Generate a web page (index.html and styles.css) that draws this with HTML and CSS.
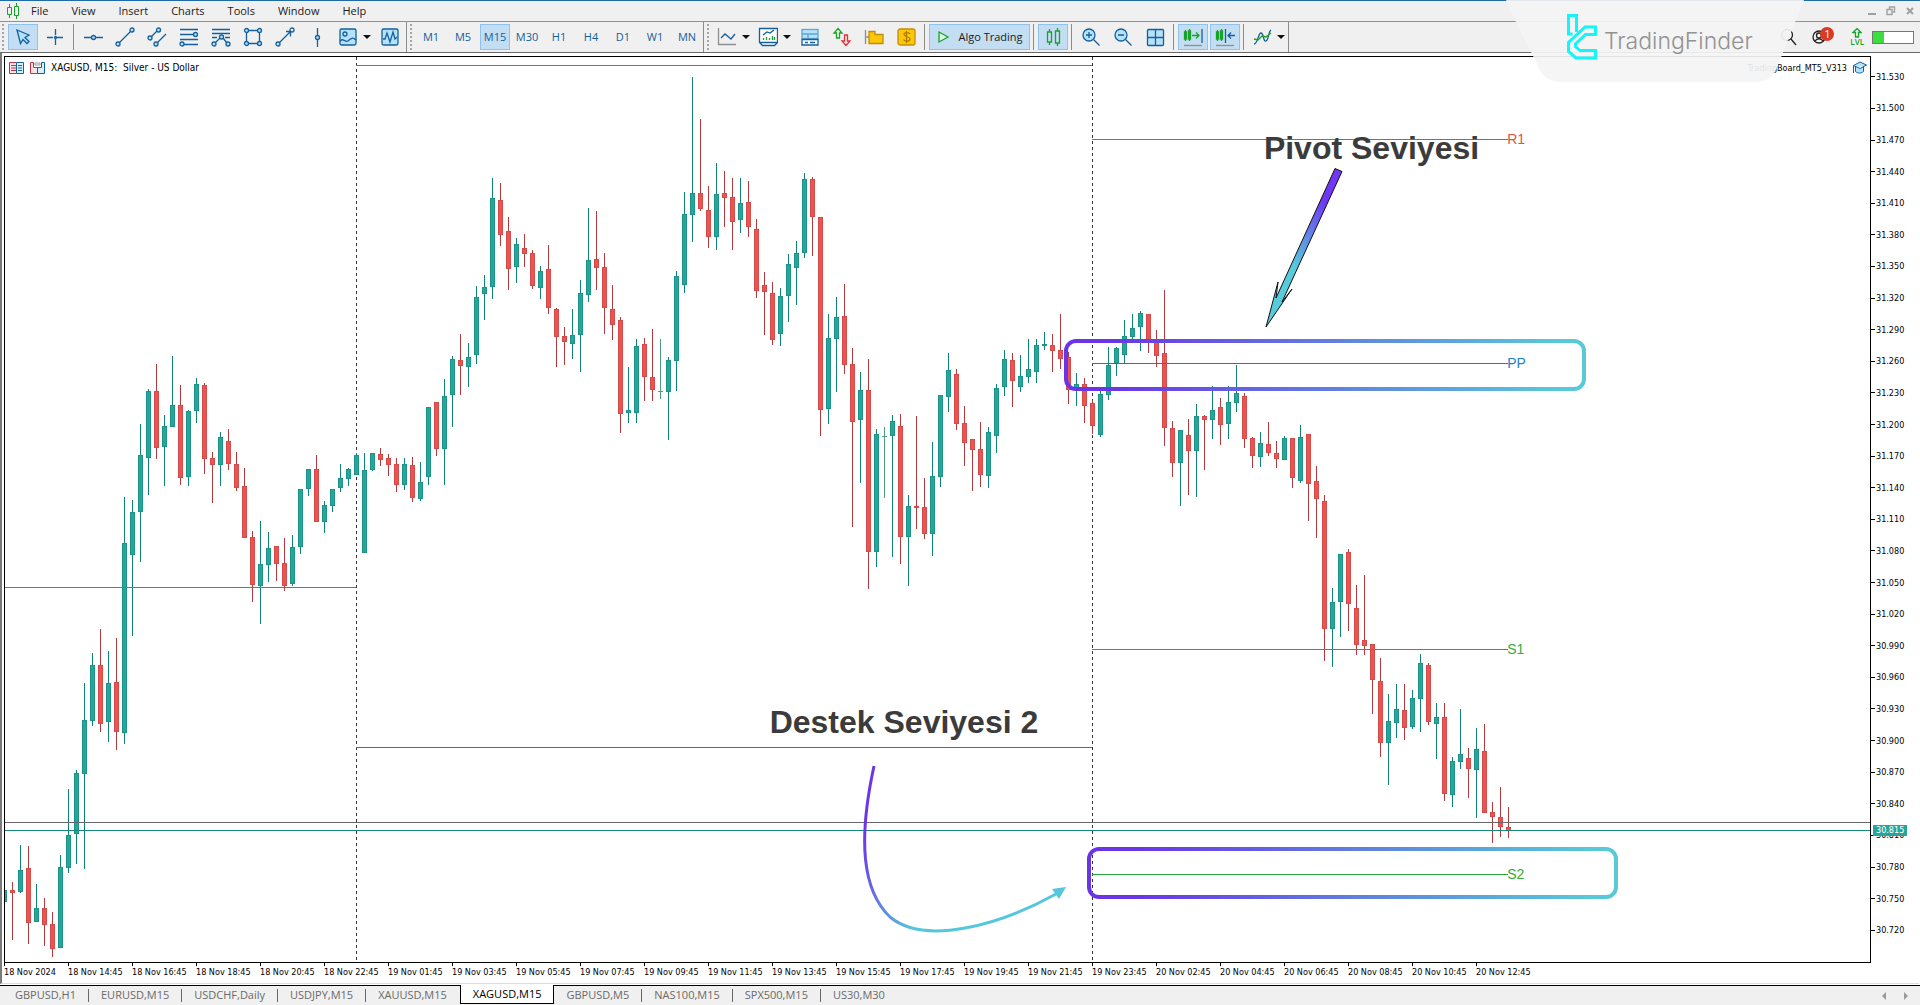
FILE: index.html
```html
<!DOCTYPE html>
<html lang="en">
<head>
<meta charset="utf-8">
<title>XAGUSD, M15</title>
<link rel="stylesheet" href="styles.css">
</head>
<body>
<header class="menubar">
  <svg class="app-icon" width="14" height="16" viewBox="0 0 14 16"><path d="M3.500 1v3M3.500 11v4M10.500 0v3M10.500 12v4M1.500 4.500h4v7h-4zM8.500 3.500h4v9h-4z"/></svg>
  <nav class="menus">
    <button>File</button><button>View</button><button>Insert</button><button>Charts</button><button>Tools</button><button>Window</button><button>Help</button>
  </nav>
  <div class="window-controls">
    <button aria-label="Minimize"><svg width="10" height="10"><path d="M1 8h8" stroke-width="2"/></svg></button>
    <button aria-label="Restore"><svg width="10" height="10"><path d="M1 3.500h5v5h-5zM3.500 3V1h5v5h-2" fill="none" stroke-width="1.400"/></svg></button>
    <button aria-label="Close"><svg width="10" height="10"><path d="M2 2l6 6M8 2l-6 6" stroke-width="2"/></svg></button>
  </div>
</header>

<div class="toolbars">
  <div class="toolbar">
    <span class="grip"></span>
    <button class="tool on" aria-label="Cursor"><svg class="ic" viewBox="0 0 20 20"><path class="f" d="M4 3l12 5-4 2.500 4 4-2 2-4-4-2.500 4z"/></svg></button>
    <button class="tool" aria-label="Crosshair"><svg class="ic" viewBox="0 0 20 20"><path d="M2 10.500h6M12 10.500h6M10.500 2v6M10.500 12v6"/><circle cx="10.500" cy="10.500" r="1"/></svg></button>
    <i class="sep"></i>
    <button class="tool" aria-label="Horizontal line"><svg class="ic" viewBox="0 0 20 20"><path d="M1 10.500h7M13 10.500h7"/><circle class="f" cx="10.500" cy="10.500" r="2"/></svg></button>
    <button class="tool" aria-label="Trend line"><svg class="ic" viewBox="0 0 20 20"><path d="M4.500 15.500l11-11"/><circle class="f" cx="3" cy="17" r="2"/><circle class="f" cx="17" cy="3" r="2"/></svg></button>
    <button class="tool" aria-label="Channel"><svg class="ic" viewBox="0 0 20 20"><path d="M4 10l6-6M10 16l9-9"/><circle class="f" cx="3" cy="11" r="2"/><circle class="f" cx="11.500" cy="3" r="2"/><circle class="f" cx="9" cy="17" r="2"/></svg></button>
    <button class="tool" aria-label="Fibonacci"><svg class="ic" viewBox="0 0 20 20"><path d="M1 2.500h18M1 7.500h13M1 12.500h18M5 17.500h14"/><circle class="f" cx="16.500" cy="7.500" r="2"/><circle class="f" cx="3" cy="17" r="2"/></svg></button>
    <button class="tool" aria-label="Fan"><svg class="ic" viewBox="0 0 20 20"><path d="M1 2.500h18M1 6.500h18M1 10.500h5M14 10.500h5M4 16l5-5M12 11l4 5"/><circle class="f" cx="10.500" cy="10" r="2"/><circle class="f" cx="3" cy="17" r="2"/><circle class="f" cx="17" cy="17" r="2"/></svg></button>
    <button class="tool" aria-label="Rectangle"><svg class="ic" viewBox="0 0 20 20"><path d="M3.500 3.500h13v13h-13z"/><circle class="f" cx="3.500" cy="3.500" r="2"/><circle class="f" cx="16.500" cy="3.500" r="2"/><circle class="f" cx="3.500" cy="16.500" r="2"/><circle class="f" cx="16.500" cy="16.500" r="2"/></svg></button>
    <button class="tool" aria-label="Arrow"><svg class="ic" viewBox="0 0 20 20"><path d="M4.500 15.500l11-11M11 4.500h4.500v5"/><circle class="f" cx="3" cy="17" r="2"/><circle cx="17" cy="3" r="2"/></svg></button>
    <button class="tool" aria-label="Vertical line"><svg class="ic" viewBox="0 0 20 20"><path d="M10.500 1v7M10.500 13v7"/><circle class="f" cx="10.500" cy="10.500" r="2"/></svg></button>
    <button class="tool drop" aria-label="Objects"><svg class="ic" viewBox="0 0 20 20"><rect class="f" x="2" y="2" width="16" height="16" rx="1.500"/><circle cx="7" cy="7" r="2"/><path d="M2 14c3-4 5 2 8 0s4-5 8-1"/></svg><i class="caret"></i></button>
    <button class="tool" aria-label="Indicators"><svg class="ic" viewBox="0 0 20 20"><rect class="f" x="2" y="2" width="16" height="16" rx="1.500"/><path d="M3 12h2l2-6 3 9 3-10 2 7 2-2"/></svg></button>
  </div>
  <div class="toolbar">
    <span class="grip"></span>
    <button class="tool">M1</button><button class="tool">M5</button><button class="tool on">M15</button><button class="tool">M30</button><button class="tool">H1</button><button class="tool">H4</button><button class="tool">D1</button><button class="tool">W1</button><button class="tool">MN</button>
  </div>
  <div class="toolbar">
    <span class="grip"></span>
    <button class="tool drop" aria-label="Chart type"><svg class="ic" viewBox="0 0 20 20"><path class="g" d="M1.500 1v16.500H19"/><path d="M4 11l4-4 6 5 4-5"/></svg><i class="caret"></i></button>
    <button class="tool drop" aria-label="Templates"><svg class="ic" viewBox="0 0 20 20"><path class="w" d="M1.500 1.500h18v14l-3 3h-12l-3-3zM2 15.500h17"/><path d="M5 8l4-3 3 1 4-3"/><path class="gr" d="M5.500 13v-2M8.500 13v-3M11.500 13v-2M14.500 13v-4M16.500 13v-3"/></svg><i class="caret"></i></button>
    <button class="tool" aria-label="Terminal"><svg class="ic" viewBox="0 0 20 20"><rect class="f soft" x="2" y="2.500" width="16" height="9"/><path class="soft" d="M2 7h16M8 7v4"/><path class="w" d="M2 12.500h16v5.500H2z"/><path d="M5 15.500h3M10 15.500h5"/></svg></button>
    <button class="tool" aria-label="Depth of market"><svg class="ic" viewBox="0 0 20 20"><path class="gr" d="M6 1.500l4 4.500H7.500v5h-3V6H2z"/><path class="rd" d="M14 18.500l4-4.500h-2.500V8h-3v6H10z"/></svg></button>
    <button class="tool" aria-label="Navigator"><svg class="ic" viewBox="0 0 20 20"><path class="g" d="M1.500 3v14M1.500 10h4"/><path class="y" d="M5 4.500h6v3h8v9H5z"/></svg></button>
    <button class="tool" aria-label="Toolbox"><svg class="ic" viewBox="0 0 20 20"><rect class="y" x="2" y="2" width="17" height="16" rx="2"/><path class="br" d="M14 7c-1-2-6-2-6 .5s6 2 6 4.500-5 3-6.500.5M10.500 4v12"/></svg></button>
    <i class="sep"></i>
    <button class="tool on algo"><svg class="ic" viewBox="0 0 20 20"><path class="play" d="M5 5l9 5-9 5z"/></svg>Algo Trading</button>
    <i class="sep"></i>
    <button class="tool on" aria-label="Candles"><svg class="ic" viewBox="0 0 20 20"><path class="gr" d="M6.500 2v3M6.500 15v3M14.500 1v3M14.500 16v3M4.500 5h4v10h-4zM12.500 4h4v12h-4z"/></svg></button>
    <i class="sep"></i>
    <button class="tool" aria-label="Zoom in"><svg class="ic" viewBox="0 0 20 20"><circle class="f" cx="8" cy="8" r="6"/><path d="M12.500 12.500l6 6M5 8h6M8 5v6"/></svg></button>
    <button class="tool" aria-label="Zoom out"><svg class="ic" viewBox="0 0 20 20"><circle class="f" cx="8" cy="8" r="6"/><path d="M12.500 12.500l6 6M5 8h6"/></svg></button>
    <button class="tool" aria-label="Tile windows"><svg class="ic" viewBox="0 0 20 20"><rect class="f" x="2.500" y="2.500" width="16" height="16" rx="1"/><path d="M10.500 2.500v16M2.500 10.500h16"/></svg></button>
    <i class="sep"></i>
    <button class="tool on" aria-label="Auto scroll"><svg class="ic" viewBox="0 0 20 20"><path class="gr" d="M2.500 3v11M6.500 2v12M1.500 5h2v7h-2zM5.500 4h2v8h-2zM9 8.500h7M13 5.500l3 3-3 3"/><path d="M19 2v14"/><path class="g" d="M1 18.500h18"/></svg></button>
    <button class="tool on" aria-label="Chart shift"><svg class="ic" viewBox="0 0 20 20"><path class="gr" d="M2.500 3v11M6.500 2v12M1.500 5h2v7h-2zM5.500 4h2v8h-2z"/><path d="M10.500 2v14M13 8.500h7M16 5.500l-3 3 3 3"/><path class="g" d="M1 18.500h18"/></svg></button>
    <i class="sep"></i>
    <button class="tool drop" aria-label="Indicator list"><svg class="ic" viewBox="0 0 20 20"><path d="M2 17c4 0 4-11 7-11s2 9 5 8 2-9 5-11"/><path class="gr" d="M2 12l4 1 4-4 4 1 5-4"/></svg><i class="caret"></i></button>
  </div>
  <div class="status">
    <button aria-label="Search"><svg width="18" height="18" viewBox="0 0 18 18"><circle cx="7" cy="7" r="5.500"/><path d="M11 11l5 6"/></svg></button>
    <button class="account" aria-label="Account"><svg width="16" height="16" viewBox="0 0 16 16"><circle cx="7" cy="8" r="6"/><circle cx="7" cy="6.500" r="2.500"/><path d="M3 12c2-3 6-3 8 0"/></svg><span class="badge">1</span></button>
    <button class="lvl" aria-label="Level"><svg width="10" height="10" viewBox="0 0 10 10"><path d="M5 .5L9 4.500H6.500V9h-3V4.500H1z"/></svg><span>LVL</span></button>
    <span class="battery"><i></i></span>
  </div>
</div>

<main class="chart">
  <section class="plot">
    <svg class="series" viewBox="5 57 1865 905" preserveAspectRatio="none">
      <defs>
        <linearGradient id="band"><stop offset="0.080" stop-color="#6a35e6"/><stop offset="0.950" stop-color="#57c9d9"/></linearGradient>
        <linearGradient id="drop" x1="0.700" y1="0" x2="0.300" y2="1"><stop offset="0.150" stop-color="#7038f2"/><stop offset="0.650" stop-color="#55cbdc"/></linearGradient>
        <linearGradient id="swoop" x1="0" y1="0" x2="1" y2="0.300"><stop offset="0.100" stop-color="#6d35e8"/><stop offset="0.500" stop-color="#55c6db"/></linearGradient>
      </defs>
      <g class="periods"><path d="M356.500 57V962M1092.500 57V962"/></g>
      <g id="candles"></g>
      <g class="levels">
        <path class="r" d="M5 587.500H356M356 65.500H1092M1092 139.500H1508"/>
        <path class="p" d="M356 747.500H1092M1092 363.500H1508"/>
        <path class="s" d="M1092 649.500H1508M1092 874.500H1508"/>
        <path class="ask" d="M5 822.500H1870"/>
        <path class="bid" d="M5 830.500H1870"/>
      </g>
      <g class="notes">
        <rect x="1066" y="341" width="518" height="48" rx="10" stroke="url(#band)"/>
        <rect x="1089" y="849" width="527" height="48" rx="10" stroke="url(#band)"/>
        <path class="pointer" d="M1335 168.500L1342 171.500L1282 302L1292 289L1266 327L1278 282L1276 298z"/>
        <path class="swoop" d="M874 766C858 840 862 890 890 917C925 946 1000 925 1056 894"/>
        <path class="head" d="M1066 887l-14 2 7 10z"/>
      </g>
    </svg>
    <div class="caption">
      <svg width="15" height="12" viewBox="0 0 15 12"><path class="cr" d="M7.500 .5h-7v11h7M2 3.500h5M2 6h5M2 8.500h5"/><path class="cb" d="M7.500 .5h7v11h-7zM9 3.500h4M9 6h4M9 8.500h4"/></svg>
      <svg width="15" height="12" viewBox="0 0 15 12"><path class="cr" d="M.5 .5h3v5h4v6h-7z"/><path class="cb" d="M14.500 .5h-3v5h-4v6h7z"/><path class="cg" d="M5 1h5v2H5z"/></svg>
      <span>XAGUSD, M15:&nbsp; Silver - US Dollar</span>
    </div>
    <div class="expert"><span>TradingBoard_MT5_V313</span>
      <svg width="15" height="13" viewBox="0 0 15 13"><path d="M3.500 5.500v5c2 2 6 2 8 0v-5M1.500 4.500L8 1l6.500 3L8 7.500zM1.500 4.500V12"/></svg>
    </div>
    <span class="level r1">R1</span>
    <span class="level pp">PP</span>
    <span class="level s1">S1</span>
    <span class="level s2">S2</span>
    <strong class="note pivot">Pivot Seviyesi</strong>
    <strong class="note support">Destek Seviyesi 2</strong>
  </section>
  <aside class="prices"><ol id="prices"></ol><span class="last">30.815</span></aside>
  <ol class="times" id="times"></ol>
</main>

<footer class="tabs">
  <button>GBPUSD,H1</button><button>EURUSD,M15</button><button>USDCHF,Daily</button><button>USDJPY,M15</button><button>XAUUSD,M15</button><button class="active">XAGUSD,M15</button><button>GBPUSD,M5</button><button>NAS100,M15</button><button>SPX500,M15</button><button>US30,M30</button>
  <span class="scroll"><button aria-label="Scroll left" class="left"></button><button aria-label="Scroll right" class="right"></button></span>
</footer>

<div class="brand">
  <svg class="plate" width="300" height="82" viewBox="0 0 300 82"><path d="M0 0L10 22L32 66Q38 82 56 82H250Q264 82 270 70L298 0z"/></svg>
  <svg class="mark" width="30" height="47" viewBox="0 0 30 47"><path d="M9.500 19V2.500H1.500V21h4M28.500 14H18L1.500 29.500V38.500L9 45H28.500V37.500H13L8.500 33.500V31L18.500 21.500H28.500z"/></svg>
  <span>TradingFinder</span>
</div>
<script src="chart.js"></script>
</body>
</html>
```
FILE: styles.css
```css
* { box-sizing: border-box; }
body { margin: 0; height: 100vh; display: flex; flex-direction: column; background: #fff; font: 11px/16px "Open Sans", "Noto Sans", sans-serif; color: #1a1a1a; overflow: hidden; position: relative; }
button { font: inherit; color: inherit; background: none; border: 0; padding: 0; margin: 0; }
ol { list-style: none; margin: 0; padding: 0; }
svg { display: block; }

.menubar { display: flex; align-items: center; height: 22px; border-top: 1px solid #1f6aa8; border-bottom: 1px solid #919191; background: #f0f0f0; padding: 0 5px 0 6px; flex: none; }
.app-icon path { fill: none; stroke: #17a32a; }
.menus { display: flex; gap: 1px; }
.menus button { padding: 0 11px; }
.window-controls { margin-left: auto; display: flex; gap: 9px; }
.window-controls path { stroke: #a0a0a0; }

.toolbars { display: flex; height: 31px; flex: none; background: #f0f0f0; border-bottom: 1px solid #696969; }
.toolbar { display: flex; align-items: center; gap: 2px; padding: 0 1px 0 3px; border-right: 1px solid #8c8c8c; color: #15609c; }
.toolbar:first-child { padding-left: 2px; }
.grip { width: 2px; height: 26px; margin-right: 2px; background: repeating-linear-gradient(#a6a6a6 0 2px, transparent 2px 4px); }
.tool { width: 30px; height: 26px; display: flex; align-items: center; justify-content: center; border: 1px solid transparent; flex: none; }
.tool.on { background: #c3def3; border-color: #90c3eb; }
.tool.drop { width: 39px; justify-content: flex-start; padding-left: 3px; gap: 5px; }
.tool.algo { width: 101px; color: #1a1a1a; gap: 4px; padding-right: 2px; }
.sep { width: 1px; height: 26px; background: #8c8c8c; margin: 0 2px 0 1px; }
.caret { border: 4px solid transparent; border-top-color: #111; border-bottom: 0; }
.ic { width: 20px; height: 20px; fill: none; stroke: #15609c; stroke-width: 1.3; flex: none; }
.ic .f { fill: #b5e2fb; }
.ic .w { fill: #fff; }
.ic .soft { stroke: #5fa6d3; }
.ic .g { stroke: #8e8e8e; }
.ic .gr { stroke: #17a32a; }
.ic .rd { stroke: #d9373c; fill: #fbdcdc; }
.ic .y { fill: #fcc60a; stroke: #c48d06; }
.ic .br { stroke: #b07a00; }
.ic .play { stroke: #17a32a; fill: #e3f7e6; }

.status { margin-left: auto; display: flex; align-items: center; padding-right: 6px; }
.status svg { fill: none; stroke: #222; stroke-width: 1.3; }
.account { position: relative; margin-left: 14px; width: 22px; }
.badge { position: absolute; left: 8px; top: -2px; width: 14px; height: 14px; border-radius: 7px; background: #d93a22; color: #fff; line-height: 14px; }
.lvl { display: flex; flex-direction: column; align-items: center; margin-left: 16px; color: #17a32a; font-size: 8px; line-height: 8px; font-weight: 600; }
.status .lvl svg { stroke: #17a32a; }
.battery { width: 42px; height: 13px; border: 1px solid #777; background: #fff; margin-left: 8px; display: flex; }
.battery i { width: 11px; background: #3fdc3f; }

.chart { flex: 1; min-height: 0; display: grid; grid-template-columns: 1fr 48px; grid-template-rows: minmax(0, 1fr) 20px; margin: 0 1px 1px 0; padding: 3px 0 0 2px; border-left: 2px solid #7a7a7a; border-bottom: 1px solid #dcdcdc; font: 9px/12px "DejaVu Sans Condensed", "DejaVu Sans", sans-serif; color: #000; }
.plot { position: relative; border: 1px solid #000; }
.series { width: 100%; height: 100%; shape-rendering: crispEdges; }
.periods path { stroke: #333; stroke-dasharray: 3 3; }
.levels path { fill: none; }
.levels .r { stroke: #c8523f; }
.levels .p { stroke: #2277b8; }
.levels .s { stroke: #2aa43a; }
.levels .ask { stroke: #666; }
.levels .bid { stroke: #16877d; }
.wick.up { fill: #0f8377; }
.wick.down { fill: #b03a3e; }
.body.up { fill: #26a69a; stroke: #1d9488; }
.body.down { fill: #ef5350; stroke: #d44a48; }
.flat { fill: #4f9e80; }
.notes { shape-rendering: auto; fill: none; stroke-width: 4; }
.notes .pointer { fill: url(#drop); stroke: #111; stroke-width: 1; }
.notes .swoop { stroke: url(#swoop); stroke-width: 3; }
.notes .head { fill: #55c6db; }

.caption { position: absolute; left: 4px; top: 5px; display: flex; align-items: center; gap: 6px; font-size: 10px; }
.caption svg { fill: none; }
.caption .cr { stroke: #c4304a; fill: #fde4e4; }
.caption .cb { stroke: #15609c; fill: #d5effc; }
.caption .cg { stroke: #999; fill: #fff; }
.expert { position: absolute; right: 3px; top: 4px; display: flex; align-items: center; gap: 5px; }
.expert path { fill: #b5e2fb; stroke: #15609c; }
.level { position: absolute; left: 80.55%; font: 14px/16px "Liberation Sans", Arial, sans-serif; transform: translateY(-50%); }
.r1 { top: 9.1%; color: #dd5347; }
.pp { top: 33.8%; color: #2380c8; }
.s1 { top: 65.4%; color: #2fae3c; }
.s2 { top: 90.3%; color: #2fae3c; }
.note { position: absolute; font: bold 32px/36px "Liberation Sans", Arial, sans-serif; color: #3b3b3b; white-space: nowrap; }
.pivot { left: 67.5%; top: 8.1%; }
.support { left: 41%; top: 71.5%; }

.prices { position: relative; display: flex; }
.prices ol { flex: 1; display: flex; flex-direction: column; padding: 5px 0 17px; }
.prices li { flex: 1; display: flex; align-items: center; gap: 1px; }
.prices li::before { content: ""; width: 4px; height: 1px; background: #000; }
.last { position: absolute; left: 2px; top: 84.8%; width: 34px; padding-left: 3px; height: 11px; line-height: 11px; background: #26a69a; color: #fff; }
.times { grid-column: 1 / -1; display: flex; white-space: nowrap; padding-right: 48px; }
.times li { flex: 64 0 0; min-width: 0; }
.times li::before { content: ""; display: block; width: 1px; height: 3px; background: #000; }
.times li:last-child { flex-grow: 331; visibility: hidden; }

.tabs { flex: none; height: 20px; display: flex; border-top: 1px solid #000; background: #f0f0f0; padding-left: 3px; color: #6a6a6a; line-height: 16px; }
.tabs > button { padding: 0 13px 2px 12px; position: relative; }
.tabs > button:not(.active):not(:last-of-type)::after { content: ""; position: absolute; right: 0; top: 3px; height: 13px; width: 1px; background: #666; }
.tabs > button:nth-child(5)::after { visibility: hidden; }
.tabs > .active { background: #fff; color: #000; border: solid #000; border-width: 0 1px 1px; margin: -1px 0 1px; padding: 0 12px 1px; }
.scroll { margin-left: auto; display: flex; align-items: center; gap: 18px; padding-right: 12px; }
.scroll button { border: 4px solid transparent; }
.scroll .left { border-right-color: #999; border-left: 0; }
.scroll .right { border-left-color: #999; border-right: 0; }

.brand { position: absolute; right: 114px; top: 0; width: 300px; height: 82px; display: flex; padding: 13px 0 0 61px; gap: 7px; color: #929292; font: 300 23px/28px Inter, Roboto, sans-serif; }
.brand .plate { position: absolute; left: 0; top: 0; fill: #f4f4f4; fill-opacity: 0.92; }
.brand .mark { position: relative; fill: none; stroke: #14f4fb; stroke-width: 3; }
.brand span { position: relative; margin-top: 14px; }
```
FILE: chart.js
```js
// Direction, high, body top, body bottom, low; one entry per 15-minute bar.
const bars = `U 890 890 902 902|D 882 890 893 940|U 845 870 892 893|D 846 868 923 944|U 884 908 922 922|D 898 908 925 946|D 912 924 949 957|U 855 867 948 948|U 789 835 868 873|U 770 773 834 864
U 683 720 774 869|U 653 665 721 726|D 629 665 724 732|U 651 683 722 742|D 638 682 732 750|U 497 543 733 744|U 500 512 555 636|U 424 455 512 562|U 389 391 458 495|D 364 391 448 459
U 415 426 447 486|U 356 405 427 427|D 385 405 478 485|U 410 411 477 486|U 378 384 411 423|D 383 385 459 474|D 452 458 465 503|U 432 437 465 486|D 429 441 464 470|D 452 464 488 491
D 468 486 538 538|D 531 537 585 602|U 521 564 586 624|U 532 548 565 582|D 546 546 564 581|D 538 563 586 591|U 535 547 584 586|U 489 489 547 554|U 469 469 489 496|D 455 469 522 522
U 501 505 522 533|U 489 489 506 512|U 464 478 488 492|U 468 469 479 486|U 453 455 475 475|U 453 470 553 553|U 453 453 470 471|D 448 454 460 466|D 454 458 465 476|D 458 464 485 492
U 458 464 485 490|D 457 465 498 502|U 462 482 499 501|U 407 407 477 485|D 402 402 449 456|U 379 396 449 485|U 356 359 395 427|D 334 360 366 395|U 343 357 367 387|U 286 297 355 364
U 275 287 294 320|U 178 198 287 299|D 183 200 235 246|D 217 231 269 290|U 238 244 267 283|D 234 248 254 267|D 250 253 286 289|U 266 271 288 299|D 245 269 308 314|D 308 309 337 367
D 327 336 342 365|U 309 335 344 359|U 280 293 335 372|U 208 260 295 302|D 211 259 268 290|D 253 267 308 334|D 285 309 325 340|D 317 320 414 433|U 367 410 413 423|U 339 346 413 423
D 338 344 377 401|D 329 377 390 401|N 339 391 392 399|U 357 360 392 440|U 271 276 361 391|U 192 214 285 293|U 77 193 215 242|D 119 193 209 211|D 186 210 237 248|U 163 194 237 250
D 171 193 198 227|D 178 197 222 250|U 178 203 220 233|D 181 202 227 237|D 219 229 291 298|D 272 285 292 335|D 282 293 340 345|U 288 296 334 346|U 254 264 296 322|U 241 253 268 305
U 173 179 253 258|D 177 179 217 256|D 217 217 410 436|U 314 338 409 424|U 297 317 339 392|D 284 316 365 374|D 348 364 422 527|U 372 390 420 483|D 359 390 552 589|U 429 434 552 567
N 427 436 437 498|U 415 421 436 557|D 414 426 537 564|U 495 506 537 586|D 416 506 508 529|D 478 507 534 539|U 442 476 534 556|U 395 395 477 487|U 353 370 397 412|D 369 374 424 430
D 406 423 443 466|D 439 439 450 491|D 422 449 475 487|U 427 432 476 488|U 384 388 436 453|U 350 359 387 396|D 353 360 381 407|U 355 376 387 392|U 339 369 377 383|U 339 345 372 383
U 332 344 346 350|D 334 345 351 372|D 314 350 359 369|D 352 357 390 404|U 373 384 389 406|D 378 384 406 423|D 400 403 426 434|U 390 394 435 437|U 347 365 395 400|U 347 348 363 376
U 320 336 355 363|U 314 328 337 339|U 311 313 327 351|D 314 314 340 353|D 330 341 356 367|D 290 353 428 446|D 421 428 463 477|U 430 430 463 506|D 419 435 451 495|U 404 416 451 497
D 415 416 420 470|U 386 410 420 439|D 398 407 425 445|U 386 402 424 439|U 365 393 403 412|D 393 396 439 448|D 437 438 456 468|U 432 443 457 467|D 422 444 453 456|D 441 453 459 468
U 436 438 460 460|D 438 438 478 488|U 425 437 481 483|D 434 434 484 521|D 466 481 499 538|D 495 501 629 661|U 588 602 629 667|U 554 554 602 637|D 549 552 604 631|D 585 608 645 655
D 575 640 646 655|D 644 644 680 714|D 658 681 743 757|U 694 721 743 785|U 684 709 723 738|D 684 710 728 740|U 690 698 727 729|U 654 663 699 732|D 663 665 722 725|U 703 717 724 759
D 703 717 794 801|U 757 761 795 807|U 709 754 762 769|D 748 758 769 798|U 728 749 770 818|D 724 751 813 813|D 802 812 817 843|D 787 817 827 837|D 807 827 831 838`;

const names = { U: "up", D: "down" };
document.getElementById("candles").innerHTML = bars.split(/[|\n]/).map((row, i) => {
  const [dir, ...levels] = row.trim().split(" ");
  const [high, top, bottom, low] = levels.map(Number);
  const x = 4 + 8 * i;
  if (dir === "N") {
    return `<path class="flat" d="M${x} ${high}h1V${low}h-1zM${x - 2} ${top}h5v1h-5z"/>`;
  }
  const name = names[dir];
  return `<rect class="wick ${name}" x="${x}" y="${high}" width="1" height="${low - high}"/>` +
    `<rect class="body ${name}" x="${x - 1.5}" y="${top + 0.5}" width="4" height="${bottom - top - 1}"/>`;
}).join("");

const prices = [];
for (let p = 31530; p >= 30720; p -= 30) prices.push(`<li>${(p / 1000).toFixed(3)}</li>`);
document.getElementById("prices").innerHTML = prices.join("");

const times = ["18 Nov 2024"];
for (const h of [14, 16, 18, 20, 22]) times.push(`18 Nov ${h}:45`);
for (let h = 1; h < 24; h += 2) times.push(`19 Nov ${String(h).padStart(2, "0")}:45`);
for (const h of ["02", "04", "06", "08", "10", "12"]) times.push(`20 Nov ${h}:45`);
document.getElementById("times").innerHTML = times.map(t => `<li>${t}</li>`).join("") + "<li></li>";
```
